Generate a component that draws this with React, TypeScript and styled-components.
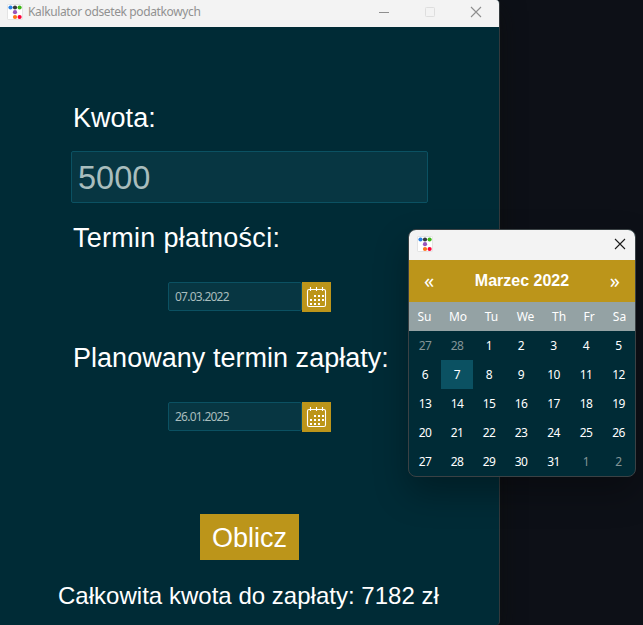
import React from "react";
import styled, { createGlobalStyle } from "styled-components";

const GlobalStyle = createGlobalStyle`
  * { box-sizing: border-box; }
  html, body { margin: 0; padding: 0; background: #0d1017; overflow: hidden; }
`;

const UI_FONT = `"Noto Sans", "Open Sans", sans-serif`;
const ARIAL = `"Liberation Sans", Arial, sans-serif`;

const Desktop = styled.div`
  position: relative;
  width: 643px;
  height: 625px;
  overflow: hidden;
  background: #0d1017;
`;

const MainWindow = styled.main`
  width: 500px;
  height: 625px;
  display: flex;
  flex-direction: column;
  background: #002b36;
  border-right: 1px solid #33393c;
  border-radius: 0 4px 4px 0;
  overflow: hidden;
  box-shadow: 0 10px 24px rgba(14, 14, 10, 0.5);
`;

const TitleBar = styled.header<{ $popup?: boolean }>`
  display: flex;
  align-items: center;
  flex: none;
  height: ${(p) => (p.$popup ? 30 : 27)}px;
  padding: ${(p) => (p.$popup ? "0 9px 2px 8px" : "0 17px 4px 7px")};
  background: #f3f3f3;
`;

const TitleText = styled.span`
  flex: 1;
  margin-left: 5px;
  padding-top: 1px;
  font: 12px/16px ${UI_FONT};
  letter-spacing: -0.37px;
  color: #919191;
  white-space: nowrap;
`;

const Spacer = styled.span`
  flex: 1;
`;

const WindowControls = styled.div`
  display: flex;
  gap: 34px;
`;

const Glyph = styled.svg`
  display: block;
  flex: none;
`;

const Form = styled.form`
  display: flex;
  flex-direction: column;
  height: 598px;
  padding: 70px 71px 0;
`;

const Label = styled.label<{ $tracking?: number }>`
  height: 40px;
  padding: 1px 0 0 2px;
  font: 27px/40px ${ARIAL};
  letter-spacing: ${(p) => p.$tracking ?? 0.03}px;
  color: #fff;
  white-space: nowrap;
`;

const AmountField = styled.div`
  width: 357px;
  height: 52px;
  margin: 14px 0 14px;
  padding: 0 6px;
  border: 1px solid #0b5162;
  border-radius: 2px;
  background: #073642;
  color: #a9bdbd;
  font: 32.5px/52px ${ARIAL};
`;

const DateRow = styled.div`
  display: flex;
  width: 163px;
  height: 30px;
  margin: 25px 0 25px 97px;
`;

const DateField = styled.div`
  flex: 1;
  height: 29px;
  padding-left: 6px;
  border: 1px solid #0b5162;
  border-radius: 2px;
  background: #073642;
  color: #a9bdbd;
  font: 12px/28px ${UI_FONT};
  letter-spacing: -0.75px;
`;

const DateButton = styled.button`
  display: grid;
  place-items: center;
  width: 29px;
  height: 30px;
  padding: 0;
  border: 0;
  background: #bc951a;
`;

const SubmitButton = styled.button`
  width: 99px;
  height: 46px;
  margin: 57px 0 0 129px;
  padding: 1px 0 0;
  border: 0;
  background: #bc951a;
  color: #fff;
  font: 27px/46px ${ARIAL};
`;

const Result = styled.output`
  margin: 16px 0 0 -13px;
  font: 24px/40px ${ARIAL};
  letter-spacing: 0.02px;
  color: #fff;
  white-space: nowrap;
`;

const Popup = styled.section`
  position: absolute;
  left: 408px;
  top: 229px;
  width: 228px;
  height: 248px;
  border: 1px solid #3a4144;
  border-radius: 8px;
  overflow: hidden;
  background: #002b36;
  box-shadow: 0 16px 34px rgba(0, 0, 0, 0.3);
`;

const MonthHeader = styled.div`
  display: flex;
  align-items: center;
  justify-content: space-between;
  height: 42px;
  padding: 0 15px;
  background: #bc951a;
  color: #fff;
`;

const MonthName = styled.strong`
  font: bold 16px/40px ${ARIAL};
`;

const MonthArrow = styled.span`
  font: 20px/42px ${UI_FONT};
`;

const Weekdays = styled.div`
  display: grid;
  grid-template-columns: 31px 36px 31px 37px 30px 30px 31px;
  height: 29px;
  background: #94a2a4;
  color: #fff;
  text-align: center;
  font: 12px/30px ${UI_FONT};
`;

const Days = styled.div`
  display: grid;
  grid-template-columns: 32px 32px 32px 32px 33px 32px 33px;
  grid-auto-rows: 29px;
`;

const Day = styled.span<{ $muted?: boolean; $selected?: boolean }>`
  text-align: center;
  font: 12px/30px ${UI_FONT};
  letter-spacing: -0.6px;
  color: ${(p) => (p.$muted ? "#839496" : "#fff")};
  background: ${(p) => (p.$selected ? "#0b5162" : "transparent")};
`;

const logoDots: [number, number, string][] = [
  [3.5, 3.5, "#2780e3"],
  [8, 3.5, "#373a3c"],
  [12.6, 3.5, "#3fb618"],
  [8, 8.2, "#9954bb"],
  [8, 13, "#ff7518"],
  [12.6, 13, "#ff0039"],
];

function Logo() {
  return (
    <Glyph width="16" height="16" viewBox="0 0 16 16">
      <rect x="0.5" y="0.5" width="15" height="15" rx="0.8" fill="#fff" stroke="#dedede" strokeWidth="0.8" />
      {logoDots.map(([x, y, fill]) => (
        <circle key={`${x}-${y}`} cx={x} cy={y} r="2.1" fill={fill} />
      ))}
    </Glyph>
  );
}

function CloseIcon({ color }: { color: string }) {
  return (
    <Glyph width="12" height="12" viewBox="0 0 12 12" stroke={color} strokeWidth="1.1">
      <path d="M1 1 11 11M11 1 1 11" />
    </Glyph>
  );
}

const iconDots = [
  [13, 12], [17, 12], [21, 12],
  [9, 16], [13, 16], [17, 16], [21, 16],
  [9, 20], [13, 20], [17, 20],
];

function CalendarIcon() {
  return (
    <Glyph width="29" height="30" viewBox="0 0 29 30" fill="none">
      <rect x="5.5" y="7.5" width="18" height="17" rx="1.6" stroke="#fff" strokeWidth="1.1" />
      <path d="M8.5 5v4M14.5 5v4M20.5 5v4" stroke="#fff" strokeWidth="1.1" />
      {iconDots.map(([x, y]) => (
        <rect key={`${x}-${y}`} x={x - 1} y={y + 1} width="2" height="2" fill="#fff" />
      ))}
    </Glyph>
  );
}

function DateEntry({ value }: { value: string }) {
  return (
    <DateRow>
      <DateField>{value}</DateField>
      <DateButton type="button">
        <CalendarIcon />
      </DateButton>
    </DateRow>
  );
}

const calendarDays = [27, 28, ...Array.from({ length: 31 }, (_, i) => i + 1), 1, 2];

export default function App() {
  return (
    <Desktop>
      <GlobalStyle />
      <MainWindow>
        <TitleBar>
          <Logo />
          <TitleText>Kalkulator odsetek podatkowych</TitleText>
          <WindowControls>
            <Glyph width="12" height="12" viewBox="0 0 12 12">
              <path d="M1 6.5h10" stroke="#8e8e8e" />
            </Glyph>
            <Glyph width="12" height="12" viewBox="0 0 12 12">
              <rect x="1.5" y="1.5" width="9" height="9" rx="0.8" fill="none" stroke="#dedede" />
            </Glyph>
            <CloseIcon color="#8e8e8e" />
          </WindowControls>
        </TitleBar>
        <Form>
          <Label>Kwota:</Label>
          <AmountField>5000</AmountField>
          <Label $tracking={0.27}>Termin płatności:</Label>
          <DateEntry value="07.03.2022" />
          <Label>Planowany termin zapłaty:</Label>
          <DateEntry value="26.01.2025" />
          <SubmitButton type="button">Oblicz</SubmitButton>
          <Result>Całkowita kwota do zapłaty: 7182 zł</Result>
        </Form>
      </MainWindow>
      <Popup>
        <TitleBar $popup>
          <Logo />
          <Spacer />
          <CloseIcon color="#1b1b1b" />
        </TitleBar>
        <MonthHeader>
          <MonthArrow>«</MonthArrow>
          <MonthName>Marzec 2022</MonthName>
          <MonthArrow>»</MonthArrow>
        </MonthHeader>
        <Weekdays>
          {["Su", "Mo", "Tu", "We", "Th", "Fr", "Sa"].map((d) => (
            <span key={d}>{d}</span>
          ))}
        </Weekdays>
        <Days>
          {calendarDays.map((d, i) => (
            <Day key={i} $muted={i < 2 || i > 32} $selected={i === 8}>
              {d}
            </Day>
          ))}
        </Days>
      </Popup>
    </Desktop>
  );
}
